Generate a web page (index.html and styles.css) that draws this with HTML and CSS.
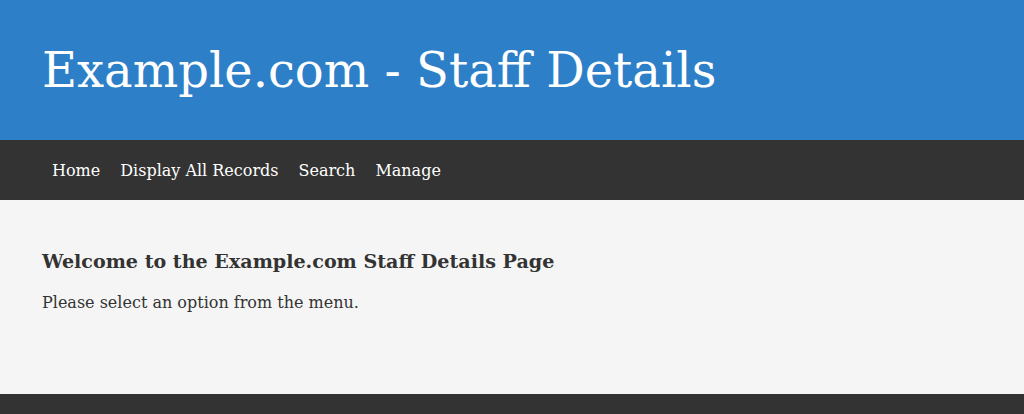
FILE: index.html
```html
<!DOCTYPE html>
<html lang="en">
<head>
<meta charset="utf-8">
<title>Example.com - Staff Details</title>
<link rel="stylesheet" href="styles.css">
</head>
<body>
<header class="site-header">
  <h1 class="site-title">Example.com - Staff Details</h1>
</header>
<nav class="site-nav">
  <a href="#" class="nav-link">Home</a>
  <a href="#" class="nav-link">Display All Records</a>
  <a href="#" class="nav-link">Search</a>
  <a href="#" class="nav-link">Manage</a>
</nav>
<main class="content">
  <h2 class="content-title">Welcome to the Example.com Staff Details Page</h2>
  <p class="content-text">Please select an option from the menu.</p>
</main>
<footer class="site-footer"></footer>
</body>
</html>
```

FILE: styles.css
```css
* { box-sizing: border-box; }
html, body {
  margin: 0;
  padding: 0;
  background: #333333;
  font-family: "DejaVu Serif", serif;
}
.site-header {
  background: #2d80c8;
  height: 140px;
  display: flex;
  align-items: center;
  padding: 0 42px;
}
.site-title {
  margin: 0;
  color: #ffffff;
  font-weight: normal;
  font-size: 48px;
  line-height: 1;
}
.site-nav {
  background: #333333;
  height: 60px;
  display: flex;
  align-items: center;
  padding: 0 42px;
}
.nav-link {
  color: #ffffff;
  text-decoration: none;
  font-size: 16px;
  padding: 0 10px;
}
.content {
  background: #f5f5f5;
  height: 194px;
  padding: 51px 42px 0;
}
.content-title {
  margin: 0 0 19px;
  font-size: 19.1px;
  line-height: 1.2;
  font-weight: bold;
  color: #333333;
}
.content-text {
  margin: 0;
  font-size: 16px;
  color: #333333;
}
.site-footer {
  background: #333333;
  height: 20px;
}
```
